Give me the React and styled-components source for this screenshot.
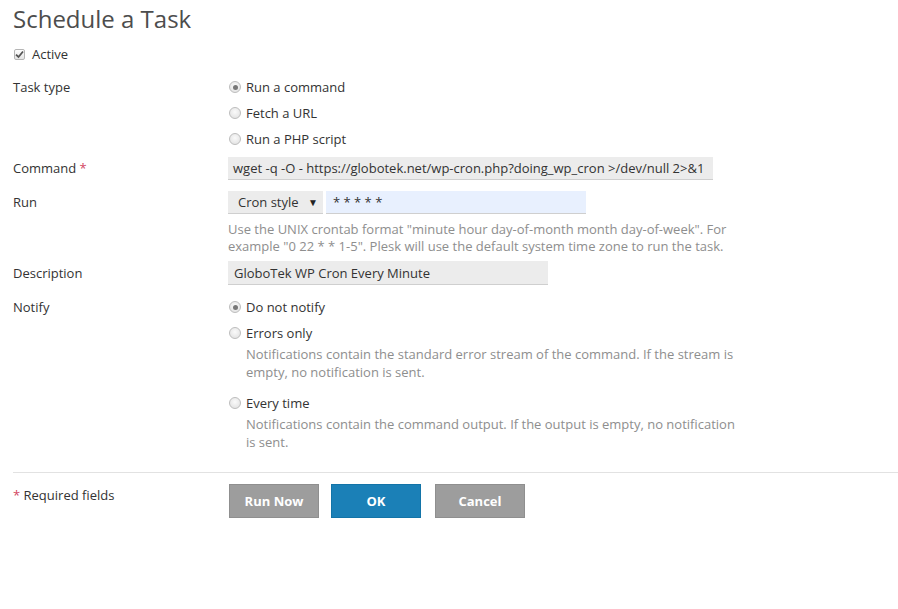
import React from "react";
import styled, { createGlobalStyle } from "styled-components";

const Global = createGlobalStyle`
  html, body { margin: 0; padding: 0; background: #fff; }
  body { font-family: "Open Sans", "Liberation Sans", sans-serif; font-size: 13px; color: #333; }
  * { box-sizing: border-box; }
`;

const Page = styled.div`
  width: 898px;
  height: 609px;
  padding: 0 0 0 13px;
`;

const Title = styled.h1`
  margin: 0;
  font-size: 24px;
  font-weight: 400;
  line-height: 38px;
  color: #4d4d4d;
`;

const ActiveRow = styled.label`
  display: flex;
  align-items: center;
  gap: 7px;
  margin-top: 7px;
  padding-left: 1px;
  line-height: 18px;
`;

const CheckBox = styled.span`
  width: 11px;
  height: 11px;
  border: 1px solid #b5b5b5;
  border-radius: 2px;
  background: linear-gradient(#fdfdfd, #e4e4e4);
  display: flex;
  align-items: center;
  justify-content: center;
`;

const Row = styled.div`
  display: grid;
  grid-template-columns: 215px 1fr;
  margin-top: ${(p) => p.$mt}px;
`;

const Label = styled.div`
  line-height: ${(p) => p.$lh || 18}px;
  color: #333;
`;

const Req = styled.span`
  color: #d2465f;
`;

const Options = styled.div`
  display: flex;
  flex-direction: column;
  gap: ${(p) => p.$gap || 0}px;
`;

const Option = styled.div`
  display: flex;
  flex-direction: column;
  margin-top: ${(p) => p.$mt || 0}px;
`;

const OptionLine = styled.label`
  display: flex;
  align-items: center;
  gap: 5px;
  line-height: 18px;
  padding-left: 1px;
`;

const Radio = styled.span`
  width: 12px;
  height: 12px;
  border-radius: 50%;
  border: 1px solid #bdbdbd;
  background: radial-gradient(circle at 50% 40%, #fafafa, #dedede);
  display: flex;
  align-items: center;
  justify-content: center;
  &::after {
    content: "";
    width: 5px;
    height: 5px;
    border-radius: 50%;
    background: ${(p) => (p.$checked ? "#777" : "transparent")};
  }
`;

const Hint = styled.div`
  color: #8e8e8e;
  line-height: ${(p) => p.$lh || 18}px;
  padding-left: ${(p) => p.$pl || 0}px;
  margin-top: ${(p) => p.$mt || 0}px;
  max-width: ${(p) => p.$mw || 520}px;
`;

const TextInput = styled.div`
  width: ${(p) => p.$w}px;
  height: ${(p) => p.$h || 23}px;
  background: ${(p) => p.$bg || "#ececec"};
  border-bottom: 1px solid #cfcfcf;
  padding-left: ${(p) => p.$pl || 6}px;
  display: flex;
  align-items: center;
  color: #333;
  white-space: nowrap;
`;

const Inline = styled.div`
  display: flex;
  gap: 3px;
`;

const Select = styled.div`
  width: 95px;
  height: 23px;
  background: #ececec;
  border-bottom: 1px solid #cfcfcf;
  padding: 0 5px 0 10px;
  display: flex;
  align-items: center;
  justify-content: space-between;
`;

const Arrow = styled.span`
  font-size: 10px;
  color: #222;
`;

const Divider = styled.hr`
  margin: 21px 0 0 0;
  border: 0;
  border-top: 1px solid #e2e2e2;
`;

const Footer = styled.div`
  display: grid;
  grid-template-columns: 216px 1fr;
  margin-top: 11px;
`;

const ReqNote = styled.div`
  line-height: 18px;
  padding-top: 2px;
`;

const Buttons = styled.div`
  display: flex;
  gap: 12px;
`;

const Button = styled.button`
  width: 90px;
  height: 34px;
  border: 1px solid ${(p) => (p.$primary ? "#1374a8" : "#8f8f8f")};
  background: ${(p) => (p.$primary ? "#1b80b7" : "#9d9d9d")};
  color: #fff;
  font-family: "Open Sans", "Liberation Sans", sans-serif;
  font-weight: 700;
  font-size: 13px;
  padding: 0;
  margin-left: ${(p) => p.$ml || 0}px;
`;

function Check() {
  return (
    <svg width="9" height="9" viewBox="0 0 9 9">
      <path d="M1 4.6 L3.5 7 L8 1.5" stroke="#555" strokeWidth="1.8" fill="none" />
    </svg>
  );
}

export default function App() {
  return (
    <Page>
      <Global />
      <Title>Schedule a Task</Title>
      <ActiveRow>
        <CheckBox>
          <Check />
        </CheckBox>
        Active
      </ActiveRow>

      <Row $mt={15}>
        <Label>Task type</Label>
        <Options $gap={8}>
          <OptionLine><Radio $checked />Run a command</OptionLine>
          <OptionLine><Radio />Fetch a URL</OptionLine>
          <OptionLine><Radio />Run a PHP script</OptionLine>
        </Options>
      </Row>

      <Row $mt={9}>
        <Label $lh={23}>Command <Req>*</Req></Label>
        <TextInput $w={485} $pl={5}>
          wget -q -O - https://globotek.net/wp-cron.php?doing_wp_cron &gt;/dev/null 2&gt;&amp;1
        </TextInput>
      </Row>

      <Row $mt={11}>
        <Label $lh={23}>Run</Label>
        <div>
          <Inline>
            <Select>
              Cron style <Arrow>▼</Arrow>
            </Select>
            <TextInput $w={260} $bg="#e8f0fe" $pl={7}>
              * * * * *
            </TextInput>
          </Inline>
          <Hint $mt={7} $lh={17}>
            Use the UNIX crontab format "minute hour day-of-month month day-of-week". For example "0 22 * * 1-5". Plesk will use the default system time zone to run the task.
          </Hint>
        </div>
      </Row>

      <Row $mt={6}>
        <Label $lh={24}>Description</Label>
        <TextInput $w={320} $h={24}>GloboTek WP Cron Every Minute</TextInput>
      </Row>

      <Row $mt={13}>
        <Label>Notify</Label>
        <Options>
          <Option>
            <OptionLine><Radio $checked />Do not notify</OptionLine>
          </Option>
          <Option $mt={8}>
            <OptionLine><Radio />Errors only</OptionLine>
            <Hint $pl={18} $mt={3} $mw={510}>
              Notifications contain the standard error stream of the command. If the stream is empty, no notification is sent.
            </Hint>
          </Option>
          <Option $mt={13}>
            <OptionLine><Radio />Every time</OptionLine>
            <Hint $pl={18} $mt={3} $mw={510}>
              Notifications contain the command output. If the output is empty, no notification is sent.
            </Hint>
          </Option>
        </Options>
      </Row>

      <Divider />

      <Footer>
        <ReqNote><Req>*</Req> Required fields</ReqNote>
        <Buttons>
          <Button>Run Now</Button>
          <Button $primary>OK</Button>
          <Button $ml={2}>Cancel</Button>
        </Buttons>
      </Footer>
    </Page>
  );
}
